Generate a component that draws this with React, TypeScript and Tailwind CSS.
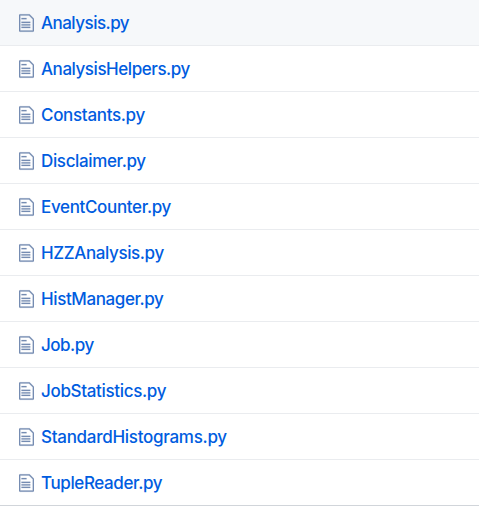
const files: [string, string][] = [
  ['Analysis.py', 'tracking-[-0.52px]'],
  ['AnalysisHelpers.py', 'tracking-[-0.45px]'],
  ['Constants.py', 'tracking-[-0.32px]'],
  ['Disclaimer.py', 'tracking-[-0.36px]'],
  ['EventCounter.py', 'tracking-[-0.34px]'],
  ['HZZAnalysis.py', 'tracking-[-0.39px]'],
  ['HistManager.py', 'tracking-[-0.4px]'],
  ['Job.py', 'tracking-[-0.5px]'],
  ['JobStatistics.py', 'tracking-[-0.33px]'],
  ['StandardHistograms.py', 'tracking-[-0.28px]'],
  ['TupleReader.py', 'tracking-[-0.39px]'],
];

function FileIcon() {
  return (
    <svg className="h-[20px] w-[15px] shrink-0 fill-[#768db2] stroke-[#768db2]" strokeWidth="0.15" viewBox="0 0 12 16">
      <path fillRule="evenodd" d="M6 5H2V4h4v1zM2 8h7V7H2v1zm0 2h7V9H2v1zm0 2h7v-1H2v1zm10-7.5V14c0 .55-.45 1-1 1H1c-.55 0-1-.45-1-1V2c0-.55.45-1 1-1h7.5L12 4.5zM11 5L8 2H1v12h10V5z" />
    </svg>
  );
}

export default function App() {
  return (
    <ul className="h-[506px] w-full overflow-hidden bg-white font-['Inter',sans-serif]">
      {files.map(([name, tracking]) => (
        <li key={name} className="flex h-[46px] items-center gap-[7px] border-b border-[#eaecef] pl-[19px] first:bg-[#f6f8fa] last:border-[#d1d5da]">
          <FileIcon />
          <a className={`text-[17px] leading-6 font-[450] text-[#005ce0] ${tracking}`}>{name}</a>
        </li>
      ))}
    </ul>
  );
}
